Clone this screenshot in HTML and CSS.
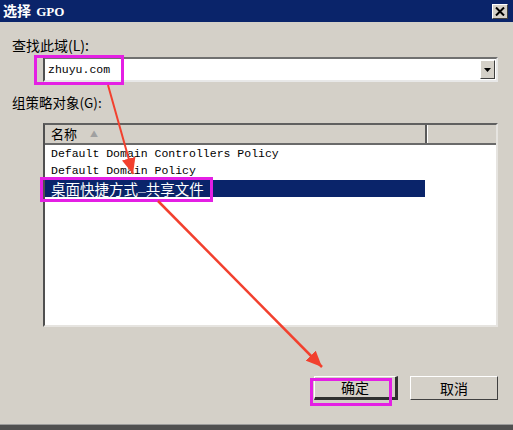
FILE: index.html
```html
<!DOCTYPE html>
<html>
<head>
  <title>选择 GPO</title>
  <link rel="stylesheet" href="styles.css">
</head>
<body>
  <div class="dialog">
    <div class="titlebar">
      <span class="title">选择 <span class="title-latin">GPO</span></span>
      <span class="close">
        <svg width="10" height="9" viewBox="0 0 10 9"><path d="M1 0.5 L9 8.5 M9 0.5 L1 8.5" stroke="#000" stroke-width="2"/></svg>
      </span>
    </div>

    <div class="content">
      <div class="label">查找此域(L):</div>
      <div class="combo">
        <div class="combo-text">zhuyu.com</div>
        <div class="combo-btn">
          <svg width="7" height="4" viewBox="0 0 7 4"><path d="M0 0 H7 L3.5 4 Z" fill="#000"/></svg>
        </div>
      </div>

      <div class="label label-gpo">组策略对象(G):</div>
      <div class="list">
        <div class="list-head">
          <div class="col col-name">名称 <span class="sort">▲</span></div>
          <div class="col col-rest"></div>
        </div>
        <div class="row">Default Domain Controllers Policy</div>
        <div class="row">Default Domain Policy</div>
        <div class="row selected"><span class="row-cell">桌面快捷方式<span class="under">_</span>共享文件</span></div>
      </div>

      <div class="buttons">
        <button class="btn btn-default">确定</button>
        <button class="btn">取消</button>
      </div>
    </div>

    <div class="bottom-edge"></div>

    <!-- annotations drawn over the dialog -->
    <svg class="marks" width="513" height="430" viewBox="0 0 513 430">
      <defs>
        <marker id="head" markerUnits="userSpaceOnUse" markerWidth="18" markerHeight="14" refX="16" refY="7" orient="auto">
          <path d="M0 0 L16 7 L0 14 Z" fill="#f2402e"/>
        </marker>
      </defs>
      <rect x="35.5" y="56.5" width="87" height="27" fill="none" stroke="#e41fe4" stroke-width="3"/>
      <rect x="41.5" y="178.5" width="170" height="22" fill="none" stroke="#e41fe4" stroke-width="3"/>
      <rect x="311.5" y="379.5" width="79" height="25" fill="none" stroke="#e41fe4" stroke-width="3"/>
      <line x1="108" y1="85" x2="133" y2="174" stroke="#f2402e" stroke-width="2" marker-end="url(#head)"/>
      <line x1="158" y1="201" x2="322" y2="367" stroke="#f2402e" stroke-width="2.5" marker-end="url(#head)"/>
    </svg>
  </div>
</body>
</html>
```

FILE: styles.css
```css
body {
  margin: 0;
  background-color: #d4d0c8;
  font-family: "Noto Sans CJK SC", "Liberation Sans", sans-serif;
}

.dialog {
  position: relative;
  width: 513px;
  height: 430px;
  overflow: hidden;
  background-color: #d4d0c8;
}

.titlebar {
  display: flex;
  align-items: center;
  justify-content: space-between;
  height: 22px;
  padding: 0 5px 0 3px;
  background-color: #0a246a;
}

.title {
  color: white;
  font-size: 14px;
  font-weight: bold;
  line-height: 22px;
}

.title-latin {
  margin-left: 2px;
  font-family: "Liberation Serif", serif;
  font-size: 13px;
}

.close {
  display: flex;
  align-items: center;
  justify-content: center;
  width: 14px;
  height: 13px;
  background-color: #d4d0c8;
  border: 1px solid;
  border-color: #ffffff #404040 #404040 #ffffff;
}

.content {
  padding: 14px 15px 0 12px;
}

.label {
  font-size: 14px;
  line-height: 18px;
  color: #000;
}

.label-gpo {
  margin-top: 11px;
  font-size: 13.5px;
}

.combo {
  display: flex;
  align-items: center;
  margin: 3px 0 0 31px;
  width: 451px;
  height: 21px;
  background-color: white;
  border: 2px solid;
  border-color: #707070 #e8e8e8 #e8e8e8 #505050;
}

.combo-text {
  flex: 1;
  padding-left: 3px;
  font-family: "Liberation Mono", monospace;
  font-size: 11.5px;
  color: #000;
}

.combo-btn {
  display: flex;
  align-items: center;
  justify-content: center;
  width: 13px;
  height: 17px;
  margin-right: 1px;
  background-color: #d4d0c8;
  border: 1px solid;
  border-color: #ffffff #404040 #404040 #ffffff;
}

.list {
  margin: 12px 0 0 31px;
  width: 451px;
  height: 200px;
  background-color: white;
  border: 2px solid;
  border-color: #606060 #e6e4e0 #e6e4e0 #505050;
}

.list-head {
  display: flex;
  height: 18px;
  background-color: #d4d0c8;
  border-bottom: 2px solid #6a6a6a;
}

.col {
  font-size: 13px;
  line-height: 18px;
}

.col-name {
  width: 374px;
  padding-left: 6px;
  border-right: 2px solid #5a5a5a;
  box-shadow: 1px 0 0 #ffffff;
}

.sort {
  margin-left: 10px;
  font-size: 8px;
  color: #a0a0a0;
  vertical-align: 2px;
}

.row {
  height: 17px;
  padding-left: 6px;
  font-family: "Liberation Mono", monospace;
  font-size: 11.5px;
  line-height: 17px;
  color: #000;
}

.row.selected {
  display: flex;
  align-items: center;
  width: 374px;
  margin-top: 1px;
  background-color: #0a246a;
  color: white;
}

.row-cell {
  display: flex;
  align-items: center;
  font-family: "Noto Sans CJK SC", sans-serif;
  font-size: 14.5px;
  line-height: 17px;
}

.under {
  align-self: flex-start;
  font-family: "Liberation Sans", sans-serif;
  font-size: 14px;
  font-weight: bold;
  line-height: 12px;
  color: #ffffff;
}

.buttons {
  display: flex;
  justify-content: flex-end;
  gap: 12px;
  margin-top: 49px;
}

.btn {
  height: 24px;
  padding: 0;
  background-color: #d4d0c8;
  border: 1px solid;
  border-color: #ffffff #404040 #404040 #ffffff;
  font-family: "Noto Sans CJK SC", sans-serif;
  font-size: 14px;
  color: #000;
  width: 88px;
}

.btn-default {
  width: 84px;
  border-right: 3px solid #303030;
  border-bottom: 3px solid #303030;
}

.bottom-edge {
  position: absolute;
  left: 0;
  right: 0;
  bottom: 0;
  height: 5px;
  background-color: #505050;
  border-top: 1px solid #9a9a9a;
}

.marks {
  position: absolute;
  top: 0;
  left: 0;
  pointer-events: none;
}
```
